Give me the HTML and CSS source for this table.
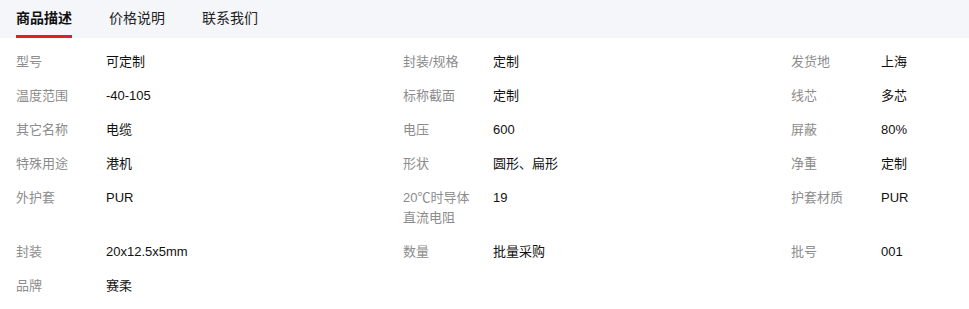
FILE: index.html
```html
<!DOCTYPE html>
<html lang="zh-CN">
<head>
    <meta charset="UTF-8">
    <meta name="viewport" content="width=device-width, initial-scale=1.0">
    <title>商品描述</title>
    <link rel="stylesheet" href="styles.css">
</head>
<body>
    <div class="tabs">
        <div class="tab active">商品描述</div>
        <div class="tab">价格说明</div>
        <div class="tab">联系我们</div>
    </div>
    <!-- Product attributes, three per row -->
    <div class="attr-grid">
        <div class="attr"><span class="label">型号</span><span class="value">可定制</span></div>
        <div class="attr"><span class="label">封装/规格</span><span class="value">定制</span></div>
        <div class="attr"><span class="label">发货地</span><span class="value">上海</span></div>

        <div class="attr"><span class="label">温度范围</span><span class="value">-40-105</span></div>
        <div class="attr"><span class="label">标称截面</span><span class="value">定制</span></div>
        <div class="attr"><span class="label">线芯</span><span class="value">多芯</span></div>

        <div class="attr"><span class="label">其它名称</span><span class="value">电缆</span></div>
        <div class="attr"><span class="label">电压</span><span class="value">600</span></div>
        <div class="attr"><span class="label">屏蔽</span><span class="value">80%</span></div>

        <div class="attr"><span class="label">特殊用途</span><span class="value">港机</span></div>
        <div class="attr"><span class="label">形状</span><span class="value">圆形、扁形</span></div>
        <div class="attr"><span class="label">净重</span><span class="value">定制</span></div>

        <div class="attr"><span class="label">外护套</span><span class="value">PUR</span></div>
        <div class="attr"><span class="label">20℃时导体直流电阻</span><span class="value">19</span></div>
        <div class="attr"><span class="label">护套材质</span><span class="value">PUR</span></div>

        <div class="attr"><span class="label">封装</span><span class="value">20x12.5x5mm</span></div>
        <div class="attr"><span class="label">数量</span><span class="value">批量采购</span></div>
        <div class="attr"><span class="label">批号</span><span class="value">001</span></div>

        <div class="attr"><span class="label">品牌</span><span class="value">赛柔</span></div>
    </div>
</body>
</html>
```

FILE: styles.css
```css
body {
    margin: 0;
    font-family: Arial, "Liberation Sans", "Noto Sans CJK SC", sans-serif;
    font-size: 13px;
    color: #222;
    background: #fff;
}
.tabs {
    display: flex;
    gap: 37px;
    height: 38px;
    padding-left: 16px;
    background-color: #f5f6fa;
}
.tab {
    position: relative;
    font-size: 14px;
    line-height: 36px;
    color: #222;
}
.tab.active {
    font-weight: bold;
    color: #111;
}
.tab.active::after {
    content: "";
    position: absolute;
    left: 0;
    right: 0;
    bottom: 0;
    height: 3px;
    background-color: #e4201c;
}
.attr-grid {
    display: grid;
    grid-template-columns: 387px 388px 1fr;
    padding: 7px 0 0 16px;
}
.attr {
    display: flex;
    padding: 7px 0;
    line-height: 20px;
}
.label {
    width: 78px;
    margin-right: 12px;
    color: #8c8c8c;
}
.value {
    color: #111;
}
```
